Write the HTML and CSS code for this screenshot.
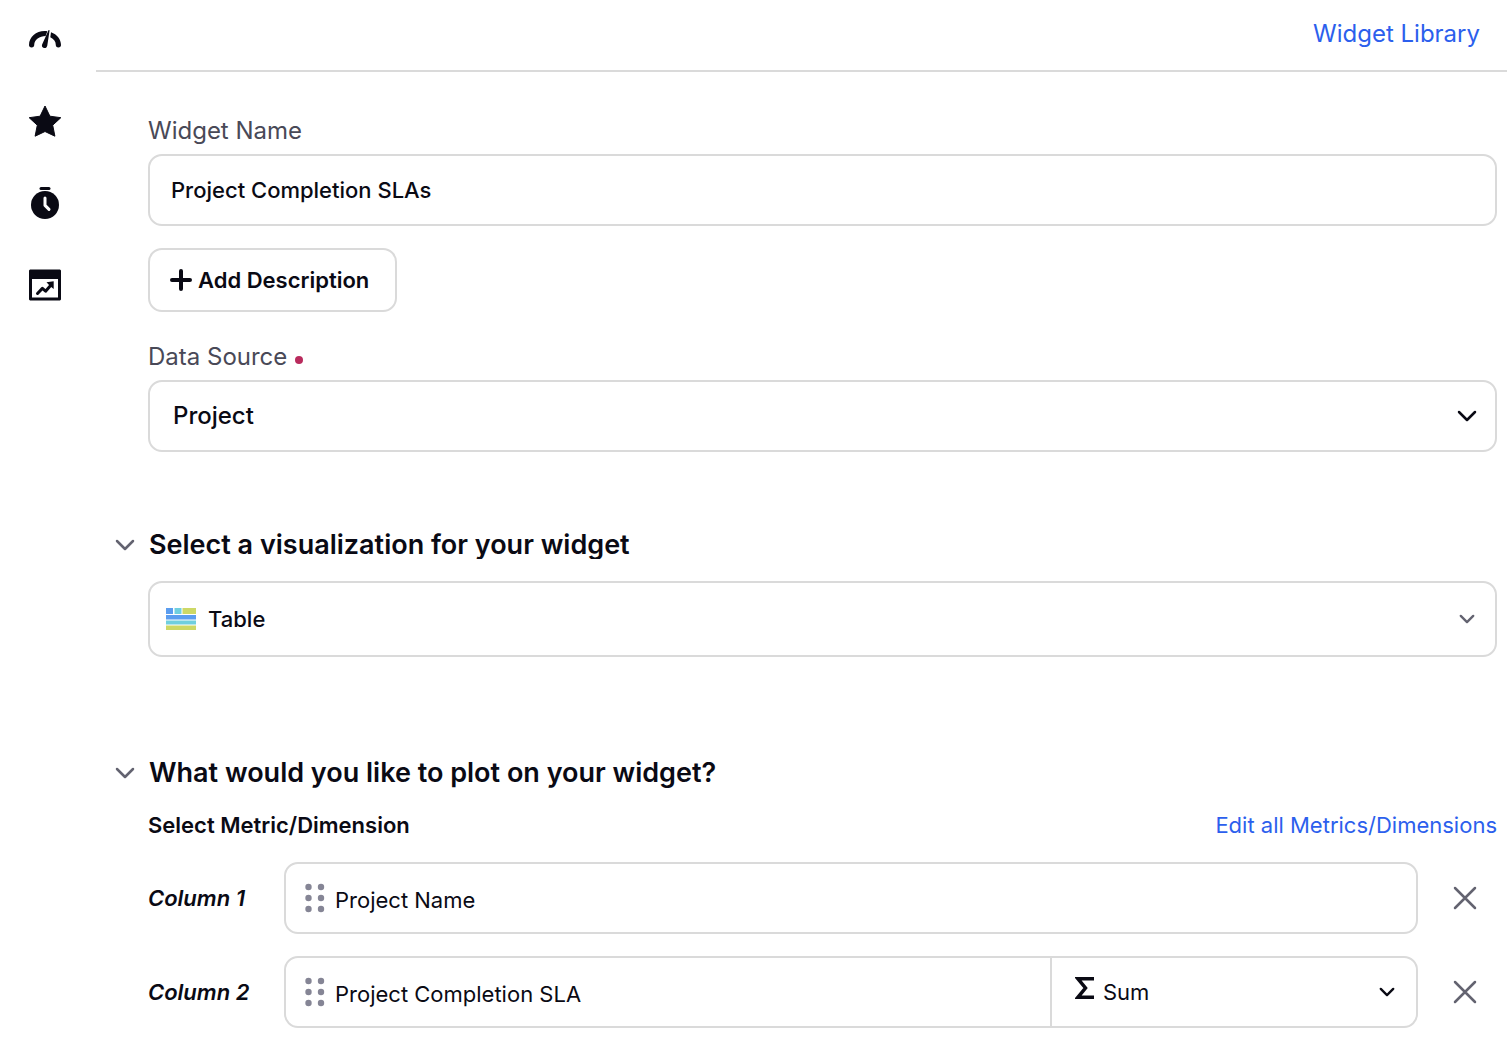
FILE: index.html
```html
<!DOCTYPE html>
<html lang="en">
<head>
    <meta charset="UTF-8">
    <meta name="viewport" content="width=device-width, initial-scale=1.0">
    <title>Widget Builder</title>
    <link rel="stylesheet" href="styles.css">
</head>
<body>
    <nav class="sidebar" aria-label="Main">
        <a href="#dashboards" aria-label="Dashboards">
            <svg class="nav-icon" viewBox="0 0 32 32">
                <path d="M2.600 23.500C0.900 23.500 0 22.500 0 21C0 13 7.200 7 15.500 7C16.600 7 17.600 7.100 18.400 7.200L16.600 12C10.500 12 5.400 15.600 5.200 21C5.200 22.500 4.300 23.500 2.600 23.500Z"/>
                <path d="M22 8.200C28 10.300 32 15.300 32 21C32 22.500 31.100 23.500 29.400 23.500C27.700 23.500 26.800 22.500 26.800 21C26.800 17.500 24.900 14.800 21.300 13.200Z"/>
                <path d="M19.600 6L20.600 6.200L18.300 21.500C17.900 23.500 16.600 24.400 15 24C13.300 23.600 12.500 22.300 13.100 20.500Z"/>
            </svg>
        </a>
        <a href="#favorites" aria-label="Favorites">
            <svg class="nav-icon" viewBox="0 0 32 32">
                <path d="M16 0L20.900 10.200L31.800 11.700L23.700 19.200L25.900 30.200L16 25.500L6.100 30.200L8.300 19.200L0.200 11.700L11.100 10.200Z" stroke="#0a0a14" stroke-width="1" stroke-linejoin="round"/>
            </svg>
        </a>
        <a href="#timers" aria-label="Timers">
            <svg class="nav-icon" viewBox="0 0 32 32">
                <circle cx="16" cy="17" r="14"/>
                <path class="line-dark" d="M12 0.500H20"/>
                <path class="line-light" d="M16 10V17.400L20 21.400"/>
            </svg>
        </a>
        <a href="#reports" aria-label="Reports">
            <svg class="nav-icon" viewBox="0 0 32 32">
                <path fill-rule="evenodd" d="M1 -0.500H31L32 0.500V29.500L31 30.500H1L0 29.500V0.500ZM3 9V27.500H29V9Z"/>
                <path class="trend" d="M8.500 23.500L13.400 18.400L16.600 21.200L22 15"/>
                <path d="M17.500 12.300L24.700 11.300L24.700 19L22.200 17L19.800 14.700Z"/>
            </svg>
        </a>
    </nav>

    <div class="page">
        <header class="topbar">
            <a href="#library" class="library-link">Widget Library</a>
        </header>

        <main class="builder">
            <form>
                <div class="fields">
                    <label class="field-label" for="widget-name">Widget Name</label>
                    <input class="box text-box" type="text" id="widget-name" value="Project Completion SLAs">

                    <button type="button" class="add-button">
                        <svg class="plus" viewBox="0 0 22 22"><path d="M11 2V20M2 11H20"/></svg>
                        Add Description
                    </button>

                    <label class="field-label" for="data-source">Data Source <span class="required"></span></label>
                    <div class="box select-box source">
                        <select id="data-source">
                            <option>Project</option>
                        </select>
                        <svg class="chevron" viewBox="0 0 18 12"><path d="M1 2L9 10L17 2"/></svg>
                    </div>
                </div>

                <section class="visualization">
                    <div class="section-head">
                        <button type="button" class="toggle" aria-label="Collapse visualization">
                            <svg class="chevron muted" viewBox="0 0 18 12"><path d="M1 2L9 10L17 2"/></svg>
                        </button>
                        <h2>Select a visualization for your widget</h2>
                    </div>
                    <div class="fields">
                        <div class="box select-box chart-type">
                            <svg class="table-icon" viewBox="0 0 30 24">
                                <path fill="#5b9def" d="M0 1H7V7H0ZM0 8H30V12.500H0Z"/>
                                <path fill="#70cfdf" d="M8.500 1H15.500V7H8.500ZM0 13.500H30V17.500H0Z"/>
                                <path fill="#cdd866" d="M16.500 1H30V7H16.500ZM0 18.500H30V23H0Z"/>
                            </svg>
                            <select aria-label="Visualization">
                                <option>Table</option>
                            </select>
                            <svg class="chevron small muted" viewBox="0 0 18 12"><path d="M1 2L9 10L17 2"/></svg>
                        </div>
                    </div>
                </section>

                <section class="plot">
                    <div class="section-head">
                        <button type="button" class="toggle" aria-label="Collapse metrics">
                            <svg class="chevron muted" viewBox="0 0 18 12"><path d="M1 2L9 10L17 2"/></svg>
                        </button>
                        <h2>What would you like to plot on your widget?</h2>
                    </div>
                    <div class="fields">
                        <div class="metric-head">
                            <h3>Select Metric/Dimension</h3>
                            <a href="#metrics">Edit all Metrics/Dimensions</a>
                        </div>

                        <div class="metric-row">
                            <span class="column-name">Column 1</span>
                            <div class="box metric-box">
                                <div class="metric">
                                    <svg class="grip" viewBox="0 0 20 30"><circle cx="3.500" cy="4" r="3.200"/><circle cx="16" cy="4" r="3.200"/><circle cx="3.500" cy="15" r="3.200"/><circle cx="16" cy="15" r="3.200"/><circle cx="3.500" cy="26" r="3.200"/><circle cx="16" cy="26" r="3.200"/></svg>
                                    <span class="metric-name">Project Name</span>
                                </div>
                            </div>
                            <button type="button" class="remove" aria-label="Remove column 1">
                                <svg viewBox="0 0 24 24"><path d="M2 2L22 22M22 2L2 22"/></svg>
                            </button>
                        </div>

                        <div class="metric-row">
                            <span class="column-name">Column 2</span>
                            <div class="box metric-box">
                                <div class="metric">
                                    <svg class="grip" viewBox="0 0 20 30"><circle cx="3.500" cy="4" r="3.200"/><circle cx="16" cy="4" r="3.200"/><circle cx="3.500" cy="15" r="3.200"/><circle cx="16" cy="15" r="3.200"/><circle cx="3.500" cy="26" r="3.200"/><circle cx="16" cy="26" r="3.200"/></svg>
                                    <span class="metric-name">Project Completion SLA</span>
                                </div>
                                <div class="aggregate">
                                    <svg class="sigma" viewBox="0 0 20 22"><path d="M19 1.800H3L10.500 11L3 20.200H19"/></svg>
                                    <select aria-label="Aggregate for column 2">
                                        <option>Sum</option>
                                    </select>
                                    <svg class="chevron small" viewBox="0 0 18 12"><path d="M1 2L9 10L17 2"/></svg>
                                </div>
                            </div>
                            <button type="button" class="remove" aria-label="Remove column 2">
                                <svg viewBox="0 0 24 24"><path d="M2 2L22 22M22 2L2 22"/></svg>
                            </button>
                        </div>
                    </div>
                </section>
            </form>
        </main>
    </div>
</body>
</html>
```
FILE: styles.css
```css
* {
    box-sizing: border-box;
}

body {
    margin: 0;
    display: flex;
    min-height: 100vh;
    background-color: #fff;
    color: #0a0a14;
    font-family: Inter, sans-serif;
    font-size: 22px;
    line-height: 30px;
}

a {
    color: #2c5fed;
    text-decoration: none;
}

svg {
    display: block;
    flex: none;
}

input, select, button {
    font: inherit;
    color: inherit;
}

/* Sidebar */
.sidebar {
    flex: none;
    width: 96px;
    padding: 24px 29px;
    display: flex;
    flex-direction: column;
    gap: 50px;
}

.nav-icon {
    width: 32px;
    height: 32px;
    fill: #0a0a14;
    overflow: visible;
}

.nav-icon .line-dark,
.nav-icon .line-light,
.nav-icon .trend {
    fill: none;
    stroke: #0a0a14;
    stroke-width: 3;
    stroke-linecap: round;
    stroke-linejoin: round;
}

.nav-icon .line-light {
    stroke: #fff;
}

/* Page */
.page {
    flex: 1;
    min-width: 0;
}

.topbar {
    height: 72px;
    padding: 0 27px 2px;
    display: flex;
    align-items: center;
    justify-content: flex-end;
    border-bottom: 2px solid #dadada;
}

.library-link {
    font-size: 24px;
}

.builder {
    padding: 44px 10px 8px 20px;
}

.fields {
    margin-left: 32px;
}

.field-label {
    display: flex;
    align-items: center;
    gap: 8px;
    margin-bottom: 8px;
    color: #494957;
    font-size: 24px;
}

.required {
    width: 8px;
    height: 8px;
    margin-top: 6px;
    border-radius: 50%;
    background-color: #b92b5d;
}

.box {
    width: 100%;
    height: 72px;
    border: 2px solid #dadada;
    border-radius: 14px;
    background-color: #fff;
}

.text-box {
    display: block;
    padding: 0 21px;
    font-weight: 500;
}

.add-button {
    height: 64px;
    margin: 22px 0 30px;
    padding: 0 26px 0 20px;
    display: flex;
    align-items: center;
    gap: 6px;
    border: 2px solid #dadada;
    border-radius: 14px;
    background-color: #fff;
    font-weight: 600;
    cursor: pointer;
}

.plus {
    width: 22px;
    height: 22px;
    fill: none;
    stroke: #0a0a14;
    stroke-width: 4;
    stroke-linecap: round;
}

.select-box {
    display: flex;
    align-items: center;
    padding-right: 19px;
}

select {
    flex: 1;
    min-width: 0;
    height: 100%;
    padding: 0;
    border: none;
    background: none;
    appearance: none;
    cursor: pointer;
}

.source {
    padding-left: 23px;
    font-size: 24px;
    font-weight: 500;
}

.chevron {
    width: 18px;
    height: 12px;
    fill: none;
    stroke: #0a0a14;
    stroke-width: 2.500;
    stroke-linecap: round;
    stroke-linejoin: round;
    overflow: visible;
}

.chevron.small {
    width: 14px;
    height: 10px;
    stroke-width: 3;
}

.chevron.muted {
    stroke: #636370;
}

/* Sections */
.visualization {
    margin-top: 79px;
}

.plot {
    margin-top: 102px;
}

.section-head {
    display: flex;
    align-items: center;
    gap: 15px;
}

.toggle,
.remove {
    padding: 0;
    border: none;
    background: none;
    cursor: pointer;
}

h2 {
    margin: 0;
    font-size: 27px;
    font-weight: 600;
    line-height: 28px;
}

.visualization h2 {
    overflow: hidden;
}

.chart-type {
    height: 76px;
    margin-top: 22px;
    padding: 0 21px 0 16px;
    gap: 12px;
    font-weight: 500;
}

.table-icon {
    width: 30px;
    height: 24px;
}

.metric-head {
    display: flex;
    align-items: center;
    justify-content: space-between;
    margin: 23px 0 22px;
}

h3 {
    margin: 0;
    font-size: 22px;
    font-weight: 600;
}

.metric-row {
    display: flex;
    align-items: center;
    margin-bottom: 22px;
}

.column-name {
    flex: none;
    width: 136px;
    font-weight: 600;
    font-style: italic;
}

.metric-box {
    flex: 1;
    min-width: 0;
    display: flex;
}

.metric {
    flex: 1;
    display: flex;
    align-items: center;
    gap: 10px;
    padding-left: 19px;
}

.grip {
    width: 20px;
    height: 30px;
    fill: #858595;
}

.metric-name {
    padding-top: 4px;
}

.aggregate {
    width: 366px;
    display: flex;
    align-items: center;
    gap: 8px;
    padding: 0 22px 0 23px;
    border-left: 2px solid #dadada;
}

.sigma {
    width: 20px;
    height: 22px;
    margin-bottom: 8px;
    fill: none;
    stroke: #0a0a14;
    stroke-width: 3.500;
}

.remove {
    margin: 0 20px 0 35px;
}

.remove svg {
    width: 24px;
    height: 24px;
    fill: none;
    stroke: #636370;
    stroke-width: 2.500;
    stroke-linecap: round;
}
```
